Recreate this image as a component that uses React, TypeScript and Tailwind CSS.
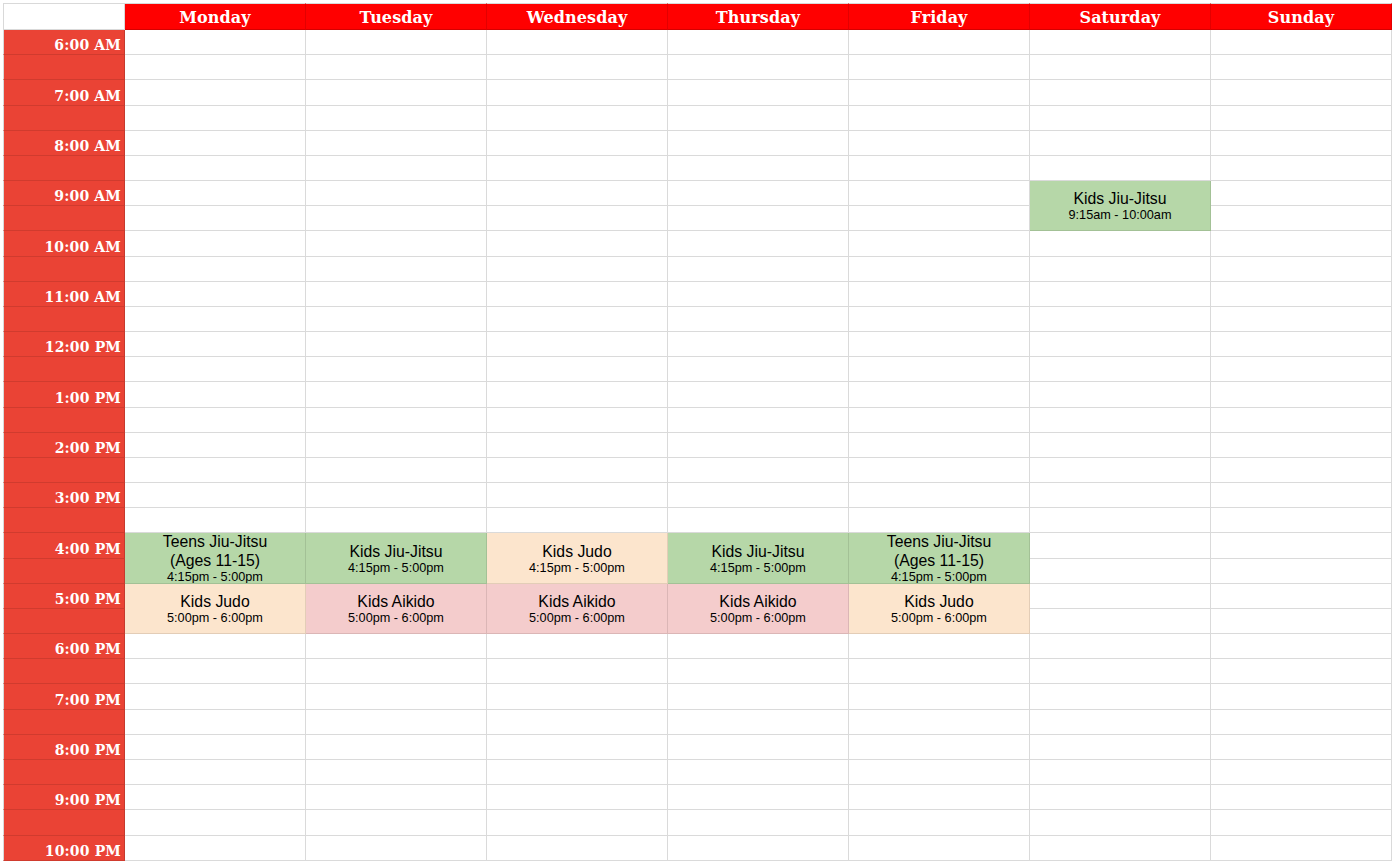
import React from "react";

type Ev = { title: string[]; time: string; color: "green" | "peach" | "pink" };

const days = ["Monday", "Tuesday", "Wednesday", "Thursday", "Friday", "Saturday", "Sunday"];

const events: Record<string, Ev> = {
  "5-6": { title: ["Kids Jiu-Jitsu"], time: "9:15am - 10:00am", color: "green" },
  "0-20": { title: ["Teens Jiu-Jitsu", "(Ages 11-15)"], time: "4:15pm - 5:00pm", color: "green" },
  "1-20": { title: ["Kids Jiu-Jitsu"], time: "4:15pm - 5:00pm", color: "green" },
  "2-20": { title: ["Kids Judo"], time: "4:15pm - 5:00pm", color: "peach" },
  "3-20": { title: ["Kids Jiu-Jitsu"], time: "4:15pm - 5:00pm", color: "green" },
  "4-20": { title: ["Teens Jiu-Jitsu", "(Ages 11-15)"], time: "4:15pm - 5:00pm", color: "green" },
  "0-22": { title: ["Kids Judo"], time: "5:00pm - 6:00pm", color: "peach" },
  "1-22": { title: ["Kids Aikido"], time: "5:00pm - 6:00pm", color: "pink" },
  "2-22": { title: ["Kids Aikido"], time: "5:00pm - 6:00pm", color: "pink" },
  "3-22": { title: ["Kids Aikido"], time: "5:00pm - 6:00pm", color: "pink" },
  "4-22": { title: ["Kids Judo"], time: "5:00pm - 6:00pm", color: "peach" },
};

const colorCls: Record<Ev["color"], string> = {
  green: "bg-[#b6d7a8] border-[#a3c196]",
  peach: "bg-[#fce5cd] border-[#e3cdb7]",
  pink: "bg-[#f4cccc] border-[#dbb6b6]",
};

function hourLabel(h: number) {
  const suffix = h >= 12 ? "PM" : "AM";
  const hh = h % 12 === 0 ? 12 : h % 12;
  return `${hh}:00 ${suffix}`;
}

const serif = "font-['DejaVu_Serif',serif] font-bold";

export default function App() {
  const cells: React.ReactNode[] = [];
  cells.push(<div key="tl" className="bg-white border border-[#d9d9d9]" />);
  days.forEach((d) =>
    cells.push(
      <div
        key={d}
        className={`bg-[#ff0000] border-t border-t-[#d9d9d9] border-r border-r-[#e30000] border-b border-b-[#d40000] flex items-center justify-center pt-[3px] text-white text-[16px] leading-[20px] tracking-[0.1px] ${serif}`}
      >
        {d}
      </div>
    )
  );
  const covered = new Set<string>();
  for (let r = 0; r < 33; r++) {
    const isHour = r % 2 === 0;
    cells.push(
      <div
        key={`t-${r}`}
        className={`bg-[#ea4335] border-l border-l-[#d9d9d9] border-r border-r-[#c53a2e] border-b border-b-[#d03b2e] flex items-end justify-end pr-[3px] pb-0 text-white text-[14px] leading-[18px] tracking-[0.15px] ${serif}`}
      >
        {isHour ? hourLabel(6 + r / 2) : ""}
      </div>
    );
    for (let d = 0; d < 7; d++) {
      const key = `${d}-${r}`;
      if (covered.has(key)) continue;
      const ev = events[key];
      if (ev) {
        covered.add(`${d}-${r + 1}`);
        cells.push(
          <div
            key={key}
            className={`row-span-2 border-r border-b ${colorCls[ev.color]} flex flex-col items-center justify-center overflow-hidden text-center text-black font-['Liberation_Sans',Arial,sans-serif]`}
          >
            {ev.title.map((t) => (
              <div key={t} className="text-[15.8px] leading-[19px] whitespace-nowrap">
                {t}
              </div>
            ))}
            <div className="text-[12.7px] leading-[14px] whitespace-nowrap">{ev.time}</div>
          </div>
        );
      } else {
        cells.push(<div key={key} className="bg-white border-r border-b border-[#dadada]" />);
      }
    }
  }

  return (
    <div className="w-[1393px] h-[866px] overflow-hidden bg-white pt-[3px] pl-[3px]">
      <div className="grid grid-cols-[122px_repeat(7,181px)] grid-rows-[27px_repeat(33,25.18px)]">
        {cells}
      </div>
    </div>
  );
}
